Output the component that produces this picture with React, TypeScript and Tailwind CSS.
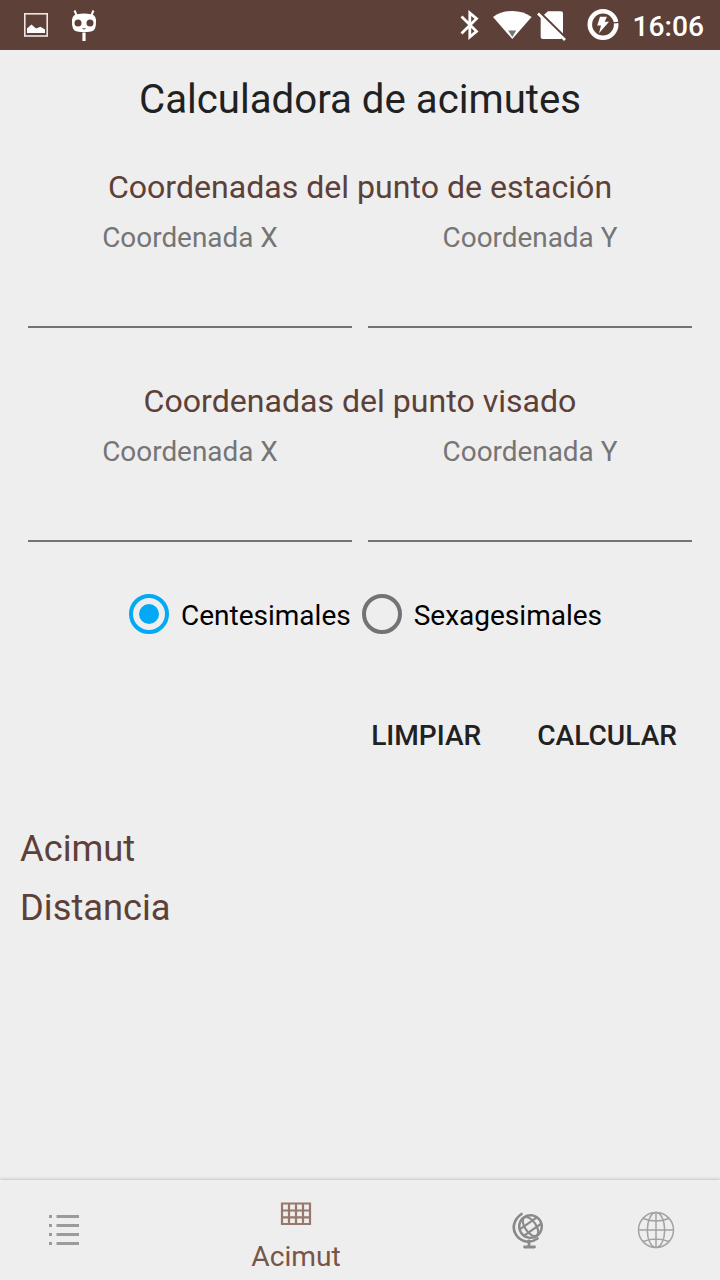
import React, { useState } from 'react';

interface PointFormProps {
  title: string;
}

interface UnitOptionProps {
  label: string;
  checked: boolean;
  onSelect: () => void;
}

const StatusBar: React.FC = () => (
  <header className="flex h-[50px] shrink-0 items-center bg-[#5d4037] text-white">
    <svg className="ml-6 shrink-0" width="24" height="50" viewBox="0 0 24 50" fill="none">
      <rect x="0.8" y="13.8" width="22.4" height="22.2" stroke="#efe6e2" strokeWidth="1.6" />
      <path d="M3 33V28.5L7.500 24.500 12 28.500 16.500 26.800 21 29.500V33Z" fill="#fff" />
    </svg>
    <svg className="ml-[23px] shrink-0" width="26" height="50" viewBox="0 0 26 50" fill="none">
      <path d="M3.5 10.5 5.5 15M22.5 10.5 20.5 15" stroke="#fff" strokeWidth="2" />
      <path d="M13 32.500v8.500" stroke="#fff" strokeWidth="3.2" />
      <path d="M6 14.2Q13 12.8 20 14.2Q24.5 14.8 25 20Q25.3 25.5 24 28.5Q23 31 20 31.4Q13 32.6 6 31.4Q3 31 2 28.5Q.7 25.5 1 20Q1.5 14.8 6 14.2Z" fill="#fff" />
      <circle cx="7" cy="23" r="3.5" fill="#5d4037" />
      <circle cx="19" cy="23" r="3.5" fill="#5d4037" />
      <path d="M11.500 28.500q1.500 1 3 0" stroke="#5d4037" strokeWidth="1" />
    </svg>
    <div className="ml-auto flex items-center">
      {/* bluetooth */}
      <svg className="shrink-0" width="20" height="50" viewBox="0 0 20 50" fill="none">
        <path d="M1.5 16.5 16.500 31.3 9.8 37V13l6.700 5.7L1.5 33.5" stroke="#fff" strokeWidth="2.8" />
      </svg>
      {/* wifi */}
      <svg className="ml-[13px] shrink-0" width="39" height="50" viewBox="0 0 39 50">
        <path d="M0 17Q8 11 19.3 11T38.6 17L19.3 39Z" fill="#fff" />
        <path d="M15.2 30.5H23.2L19.3 37Z" fill="#757575" />
      </svg>
      {/* no sim */}
      <svg className="ml-[5px] shrink-0" width="30" height="50" viewBox="0 0 30 50" fill="none">
        <path d="M11 11.300H24Q26 11.300 26 13.300V33.500L7 14.800Z" fill="#fff" />
        <path d="M3.700 16 25 38Q24.500 39 23 39H6Q3.700 39 3.700 37Z" fill="#fff" />
        <path d="M1 13.500 28 40" stroke="#fff" strokeWidth="2.6" />
      </svg>
      {/* battery */}
      <svg className="ml-5 shrink-0" width="32" height="50" viewBox="0 0 32 50" fill="none">
        <circle cx="16" cy="24.5" r="13.2" stroke="#fff" strokeWidth="4.6" />
        <path d="M25.5 22.8 32 22.3" stroke="#5d4037" strokeWidth="1.2" />
        <path d="M13 16.8H20L17.7 21.7H22L12 33.2L14 25.5H10.2Z" fill="#fff" />
      </svg>
      <span className="ml-[13px] mr-4 pt-1 text-[28.2px] leading-8 font-medium">16:06</span>
    </div>
  </header>
);

const PointForm: React.FC<PointFormProps> = ({ title }) => (
  <section className="h-[214px]">
    <h2 className="text-center text-[32.1px] leading-10 text-[#5d4037]">{title}</h2>
    <div className="mt-[11px] grid grid-cols-2 gap-4 px-7">
      {['Coordenada X', 'Coordenada Y'].map((label) => (
        <label key={label} className="block text-center text-[27.9px] leading-10 text-[#757575]">
          {label}
          <input className="block h-[70px] w-full border-b-2 border-[#737373] bg-transparent text-[36px] text-[#212121] outline-none" />
        </label>
      ))}
    </div>
  </section>
);

const UnitOption: React.FC<UnitOptionProps> = ({ label, checked, onSelect }) => (
  <button
    role="radio"
    aria-checked={checked}
    onClick={onSelect}
    className="flex h-10 items-center text-[28px] leading-10 text-black"
  >
    <span
      className={
        checked
          ? 'mr-3 flex size-10 items-center justify-center rounded-full border-4 border-[#03a9f4]'
          : 'mr-3 flex size-10 items-center justify-center rounded-full border-4 border-[#737373]'
      }
    >
      {checked && <span className="size-5 rounded-full bg-[#03a9f4]" />}
    </span>
    <span className="pt-[3px]">{label}</span>
  </button>
);

const BottomBar: React.FC = () => (
  <nav className="flex h-[100px] shrink-0 bg-[#eeeeee] shadow-[0_-1px_3px_rgba(0,0,0,0.18)]">
    <button className="flex w-32 items-center justify-center">
      <svg width="32" height="32" viewBox="0 0 32 32" fill="#9b9b9b">
        <path d="M1 1h3v3H1zM1 10h3v3H1zM1 19h3v3H1zM1 28h3v3H1zM8.500 1H31v3H8.500zM8.500 10H31v3H8.500zM8.500 19H31v3H8.500zM8.500 28H31v3H8.500z" />
      </svg>
    </button>
    <button className="flex flex-1 flex-col items-center text-[#795548]">
      <svg className="mt-5" width="32" height="26" viewBox="0 0 32 26" fill="none">
        <path d="M2 3.500H30V24H2ZM9 3.500V24M16 3.500V24M23 3.500V24M2 10.500H30M2 17.300H30" stroke="#98786d" strokeWidth="2.2" />
      </svg>
      <span className="mt-[11px] text-[28.2px] leading-10">Acimut</span>
    </button>
    <button className="flex w-32 items-center justify-center">
      <svg width="32" height="40" viewBox="0 0 32 40" fill="none" stroke="#8a8a8a" strokeLinecap="round">
        <g transform="translate(18.500 16.500) rotate(-35)">
          <circle r="11.300" strokeWidth="2.4" />
          <ellipse rx="5.500" ry="11" strokeWidth="2.200" />
          <path d="M-10 -3.800H10M-10 3.800H10" strokeWidth="2.200" />
        </g>
        <path d="M9.500 4C1.500 9.500-.500 19 4.500 25.500S18 34 25.500 28.500" strokeWidth="2.7" />
        <path d="M17 31v5M12.500 37H22.500" strokeWidth="2.8" />
      </svg>
    </button>
    <button className="flex w-32 items-center justify-center">
      <svg width="38" height="38" viewBox="0 0 38 38" fill="none" stroke="#a3a3a3" strokeWidth="1.5">
        <circle cx="19" cy="19" r="17.500" />
        <ellipse cx="19" cy="19" rx="8.700" ry="17.500" />
        <path d="M19 1.500V36.500M1.500 19H36.500M6 7.500Q19 12.500 32 7.500M6 30.500Q19 25.500 32 30.500" />
      </svg>
    </button>
  </nav>
);

const App: React.FC = () => {
  const [unit, setUnit] = useState('Centesimales');

  return (
    <div className="flex h-screen flex-col bg-[#eeeeee] font-[Roboto,sans-serif]">
      <StatusBar />
      <main className="flex-1">
        <h1 className="mt-[26px] text-center text-[40.2px] leading-[48px] text-[#212121]">
          Calculadora de acimutes
        </h1>
        <div className="mt-[43px]">
          <PointForm title="Coordenadas del punto de estación" />
          <PointForm title="Coordenadas del punto visado" />
        </div>
        <div role="radiogroup" className="-mt-px ml-[129px] flex gap-[11px]">
          {['Centesimales', 'Sexagesimales'].map((label) => (
            <UnitOption key={label} label={label} checked={unit === label} onSelect={() => setUnit(label)} />
          ))}
        </div>
        <div className="mt-[82px] mr-[43px] flex justify-end gap-14 text-[28.1px] leading-10 font-medium text-[#212121]">
          <button>LIMPIAR</button>
          <button>CALCULAR</button>
        </div>
        <div className="mt-[63px] ml-5 text-[36.3px] leading-[59px] text-[#5d4037]">
          <p>Acimut</p>
          <p>Distancia</p>
        </div>
      </main>
      <BottomBar />
    </div>
  );
};

export default App;
